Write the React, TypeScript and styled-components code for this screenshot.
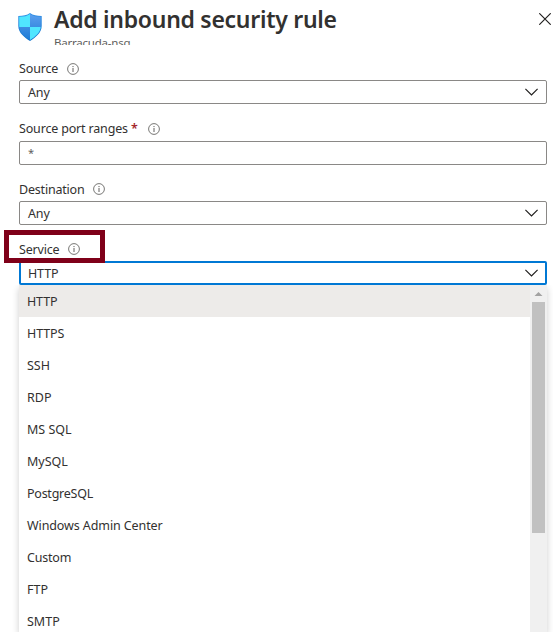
import React from "react";
import styled, { createGlobalStyle } from "styled-components";

const GlobalStyle = createGlobalStyle`
  *, *::before, *::after { box-sizing: border-box; }
  html, body { margin: 0; background: #fff; overflow: hidden; }
  body { font-family: "Noto Sans", "Open Sans", sans-serif; font-size: 12.5px; color: #323130; }
`;

const Blade = styled.main`
  width: 553px;
  height: 632px;
  overflow: hidden;
  display: flex;
  flex-direction: column;
  background: #fff;
`;

const Header = styled.header`
  height: 45px;
  flex: none;
  overflow: hidden;
  display: flex;
  align-items: flex-start;
  padding: 0 2px 0 18px;
`;

const ShieldIcon = styled.svg`
  width: 24px;
  height: 28px;
  flex: none;
  margin-top: 13px;
`;

const Titles = styled.div`
  flex: 1;
  margin-left: 12px;
  white-space: nowrap;
`;

const Title = styled.h1`
  margin: 4px 0 0;
  font-size: 23px;
  line-height: 30px;
  font-weight: 600;
  letter-spacing: -0.28px;
`;

const Subtitle = styled.div`
  font-size: 11.5px;
  line-height: 16px;
  margin-top: 1px;
  letter-spacing: -0.22px;
  color: #605e5c;
`;

const CloseButton = styled.button`
  border: 0;
  padding: 0;
  background: none;
  margin-top: 13px;
  width: 12px;
  height: 12px;
  svg { display: block; }
`;

const Form = styled.div`
  display: flex;
  flex-direction: column;
  padding: 11px 6px 0 19px;
`;

const Field = styled.div<{ $h: number }>`
  height: ${(p) => p.$h}px;
  flex: none;
  display: flex;
  flex-direction: column;
`;

const LabelRow = styled.div<{ $h: number }>`
  position: relative;
  height: ${(p) => p.$h}px;
  flex: none;
  display: flex;
  align-items: flex-start;
  white-space: nowrap;
`;

const Label = styled.label<{ $w: number; $track: number; $line?: number }>`
  width: ${(p) => p.$w}px;
  letter-spacing: ${(p) => p.$track}px;
  line-height: ${(p) => p.$line ?? 26}px;
`;

const Required = styled.span`
  color: #a4262c;
  font-weight: 600;
  line-height: 1;
`;

const InfoSvg = styled.svg`
  width: 12px;
  height: 12px;
  margin-top: 7px;
`;

const Highlight = styled.div`
  position: absolute;
  left: -15px;
  top: -6px;
  width: 101px;
  height: 33px;
  border: 5px solid #7f0019;
  z-index: 1;
`;

const Control = styled.div<{ $active?: boolean }>`
  height: 24px;
  flex: none;
  display: flex;
  align-items: center;
  justify-content: space-between;
  border: ${(p) => (p.$active ? "2px solid #0078d4" : "1px solid #8a8886")};
  border-radius: 2px;
  padding: ${(p) => (p.$active ? "0 7px" : "0 8px")};
  background: #fff;
`;

const Value = styled.span`
  line-height: 20px;
  padding-top: 2px;
  height: 22px;
  letter-spacing: -0.15px;
`;

const Star = styled.span`
  font-size: 11px;
  line-height: 20px;
  color: #605e5c;
`;

const Chevron = styled.svg`
  width: 13px;
  height: 8px;
`;

const Menu = styled.div`
  height: 347px;
  flex: none;
  display: flex;
  box-shadow: 0 3px 7px rgba(0, 0, 0, 0.2);
  background: #fff;
  clip-path: inset(0 -20px -20px -20px);
`;

const Options = styled.ul`
  flex: 1;
  margin: 0;
  padding: 0;
  list-style: none;
`;

const Option = styled.li<{ $selected: boolean; $track: number }>`
  height: 32px;
  line-height: 34px;
  padding-left: 8px;
  letter-spacing: ${(p) => p.$track}px;
  background: ${(p) => (p.$selected ? "#edebe9" : "transparent")};
`;

const Scrollbar = styled.div`
  width: 17px;
  display: flex;
  flex-direction: column;
  align-items: center;
  background: #f0f0f0;
`;

const ScrollArrow = styled.svg`
  width: 17px;
  height: 17px;
  flex: none;
`;

const Thumb = styled.div`
  width: 13px;
  height: 231px;
  background: #c1c1c1;
`;

const Info = () => (
  <InfoSvg viewBox="0 0 12 12" fill="none" stroke="#605e5c">
    <circle cx="6" cy="6" r="5.4" strokeWidth="0.85" />
    <path d="M6 5v4" strokeWidth="1" />
    <path d="M6 3v1.1" strokeWidth="1" />
  </InfoSvg>
);

const Down = () => (
  <Chevron viewBox="0 0 13 8" fill="none" stroke="#201f1e" strokeWidth="1.2">
    <path d="M.4 .9 6.500 7 12.600 .9" />
  </Chevron>
);

const Shield = () => (
  <ShieldIcon viewBox="0 0 24 28">
    <defs>
      <linearGradient id="edge" x1="0" y1="0" x2="0" y2="1">
        <stop offset="0" stopColor="#2f8fe6" />
        <stop offset="1" stopColor="#1473cc" />
      </linearGradient>
      <linearGradient id="quarter" gradientUnits="userSpaceOnUse" x1="0" y1="0" x2="0" y2="28">
        <stop offset="0" stopColor="#5ea0ef" />
        <stop offset="1" stopColor="#1a7ad5" />
      </linearGradient>
      <clipPath id="body">
        <path d="M12 .9C9 3 6.100 3.600 1.200 3.700V13c0 6.500 5.800 10.700 10.800 14.100C17 23.700 22.800 19.500 22.800 13V3.700C17.900 3.600 15 3 12 .9Z" />
      </clipPath>
    </defs>
    <path fill="url(#edge)" d="M12 0C8.800 2.300 5.600 2.900.3 3V13C.3 20 6.700 24.500 12 28 17.300 24.500 23.700 20 23.700 13V3C18.400 2.900 15.200 2.300 12 0Z" />
    <g clipPath="url(#body)">
      <path fill="#50e6ff" d="M0 0h12v14H0zM12 14h12v14H12z" />
      <path fill="url(#quarter)" d="M12 0h12v14H12zM0 14h12v14H0z" />
    </g>
  </ShieldIcon>
);

const services = [
  { name: "HTTP", track: -0.15 },
  { name: "HTTPS", track: -0.1 },
  { name: "SSH", track: 0 },
  { name: "RDP", track: 0 },
  { name: "MS SQL", track: 0 },
  { name: "MySQL", track: 0 },
  { name: "PostgreSQL", track: -0.25 },
  { name: "Windows Admin Center", track: -0.1 },
  { name: "Custom", track: -0.2 },
  { name: "FTP", track: 0 },
  { name: "SMTP", track: 0 },
];

export default function App() {
  return (
    <>
      <GlobalStyle />
      <Blade>
        <Header>
          <Shield />
          <Titles>
            <Title>Add inbound security rule</Title>
            <Subtitle>Barracuda-nsg</Subtitle>
          </Titles>
          <CloseButton aria-label="Close">
            <svg width="12" height="12" viewBox="0 0 12 12" stroke="#201f1e" strokeWidth="1.15">
              <path d="M.3 .3 11.700 11.700M11.700 .3 .3 11.700" />
            </svg>
          </CloseButton>
        </Header>
        <Form>
          <Field $h={60}>
            <LabelRow $h={24}><Label $w={48} $track={-0.15}>Source</Label><Info /></LabelRow>
            <Control><Value>Any</Value><Down /></Control>
          </Field>
          <Field $h={60}>
            <LabelRow $h={25}><Label $w={129} $track={-0.17}>Source port ranges <Required>*</Required></Label><Info /></LabelRow>
            <Control><Star>*</Star></Control>
          </Field>
          <Field $h={60}>
            <LabelRow $h={25}><Label $w={74} $track={-0.2} $line={28}>Destination</Label><Info /></LabelRow>
            <Control><Value>Any</Value><Down /></Control>
          </Field>
          <Field $h={49}>
            <LabelRow $h={25}><Label $w={49} $track={-0.2} $line={28}>Service</Label><Info /><Highlight /></LabelRow>
            <Control $active><Value>HTTP</Value><Down /></Control>
          </Field>
          <Menu>
            <Options>
              {services.map((s, i) => (
                <Option key={s.name} $selected={i === 0} $track={s.track}>{s.name}</Option>
              ))}
            </Options>
            <Scrollbar>
              <ScrollArrow viewBox="0 0 17 17"><path d="M4.500 11 8.500 7l4 4z" fill="#a3a3a3" /></ScrollArrow>
              <Thumb />
            </Scrollbar>
          </Menu>
        </Form>
      </Blade>
    </>
  );
}
